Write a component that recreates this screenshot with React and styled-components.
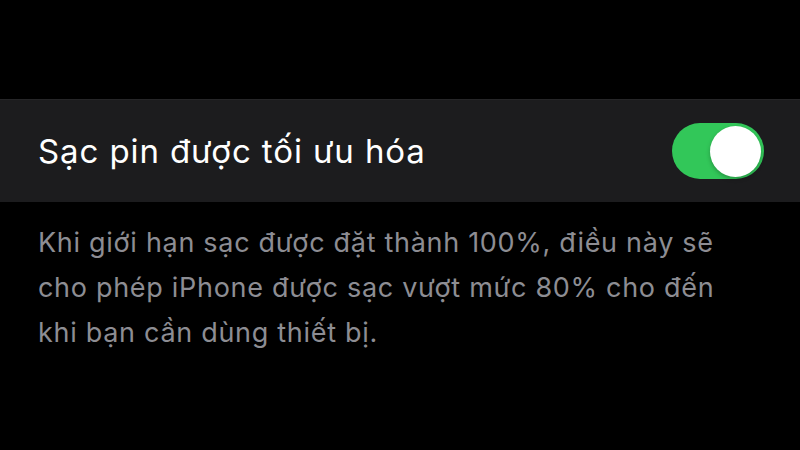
import React, { useState } from "react";
import styled, { createGlobalStyle } from "styled-components";

const Global = createGlobalStyle`
  html, body {
    margin: 0;
    padding: 0;
    background: #000;
  }
  body {
    width: 800px;
    height: 450px;
    overflow: hidden;
    font-family: Inter, "Noto Sans", "Liberation Sans", sans-serif;
  }
`;

const Page = styled.div`
  width: 800px;
  height: 450px;
  background: #000;
  padding-top: 99px;
  box-sizing: border-box;
`;

const Row = styled.div`
  height: 103px;
  background: #1c1c1e;
  border-top: 1px solid #262628;
  box-sizing: border-box;
  display: flex;
  align-items: center;
  justify-content: space-between;
  padding: 0 36px 0 38px;
`;

const Title = styled.span`
  color: #fff;
  font-size: 33px;
  font-weight: 400;
  letter-spacing: 0.9px;
`;

const Track = styled.button`
  width: 92px;
  height: 56px;
  border: none;
  border-radius: 28px;
  padding: 3px;
  display: flex;
  justify-content: ${(p) => (p.on ? "flex-end" : "flex-start")};
  align-items: center;
  background: ${(p) => (p.on ? "#32c759" : "#39393d")};
  cursor: pointer;
  box-sizing: border-box;
`;

const Knob = styled.span`
  width: 51px;
  height: 51px;
  border-radius: 50%;
  background: #fff;
  box-shadow: 0 2px 4px rgba(0, 0, 0, 0.25);
`;

const Footer = styled.p`
  margin: 0;
  padding: 18px 50px 0 38px;
  color: #8d8d93;
  font-size: 27px;
  letter-spacing: 0.7px;
  line-height: 45px;
`;

export default function App() {
  const [on, setOn] = useState(true);
  return (
    <Page>
      <Global />
      <Row>
        <Title>Sạc pin được tối ưu hóa</Title>
        <Track on={on ? 1 : 0} onClick={() => setOn(!on)}>
          <Knob />
        </Track>
      </Row>
      <Footer>
        Khi giới hạn sạc được đặt thành 100%, điều này sẽ cho phép iPhone được
        sạc vượt mức 80% cho đến khi bạn cần dùng thiết bị.
      </Footer>
    </Page>
  );
}
